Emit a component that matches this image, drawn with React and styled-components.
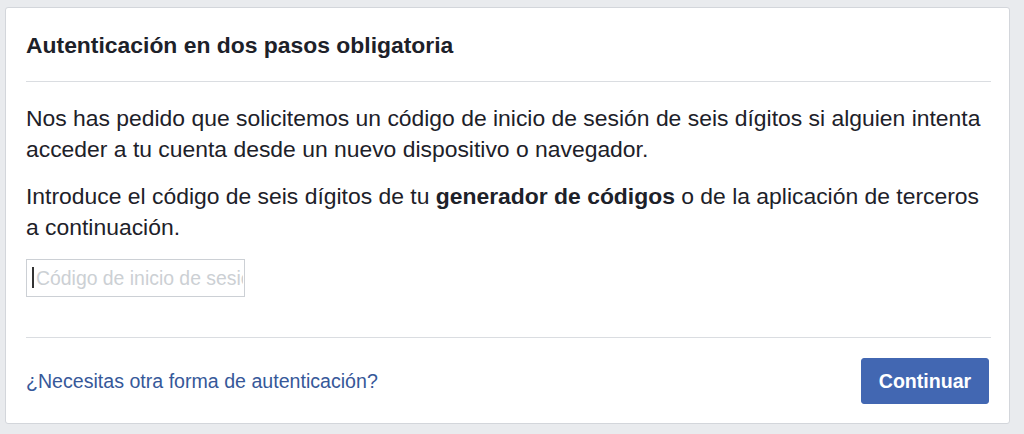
import * as React from "react";
import styled, { createGlobalStyle } from "styled-components";

const GlobalStyle = createGlobalStyle`
  html, body {
    margin: 0;
    padding: 0;
    background: #e9ebee;
    font-family: "Liberation Sans", Arial, Helvetica, sans-serif;
    color: #1d2129;
  }
  * {
    box-sizing: border-box;
  }
`;

const Page = styled.div`
  width: 1024px;
  height: 434px;
  padding: 7px 0 0 5px;
`;

const Card = styled.section`
  width: 1005px;
  height: 417px;
  background: #fff;
  border: 1px solid #d3d6db;
  border-radius: 3px;
  padding: 0 18px 0 20px;
  display: flex;
  flex-direction: column;
`;

const Header = styled.header`
  padding: 22px 0 21px;
  border-bottom: 1px solid #dadde1;
`;

const Title = styled.h2`
  margin: 0;
  font-size: 22.9px;
  line-height: 30px;
  font-weight: bold;
  color: #1d2129;
`;

const Body = styled.div`
  padding: 21px 0 40px;
  border-bottom: 1px solid #dadde1;
`;

const Text = styled.p`
  margin: 0 0 16px;
  font-size: 22.9px;
  line-height: 31px;
  color: #1d2129;
`;

const InputWrap = styled.div`
  position: relative;
  width: 219px;
  height: 38px;
`;

const CodeInput = styled.input`
  display: block;
  width: 100%;
  height: 100%;
  margin: 0;
  padding: 0 1px 0 9px;
  border: 1px solid #ccd0d5;
  border-radius: 0;
  font-family: inherit;
  font-size: 19.4px;
  color: #1d2129;
  outline: none;

  &::placeholder {
    color: #ccd0d4;
  }
`;

const Caret = styled.span`
  position: absolute;
  left: 6px;
  top: 8px;
  width: 2px;
  height: 21px;
  background: #333;
  pointer-events: none;
`;

const Footer = styled.footer`
  display: flex;
  align-items: center;
  justify-content: space-between;
  padding: 20px 2px 0 0;
`;

const HelpLink = styled.a`
  font-size: 19.6px;
  color: #365899;
  text-decoration: none;
  cursor: pointer;
`;

const PrimaryButton = styled.button`
  width: 128px;
  height: 46px;
  padding: 0;
  background: #4267b2;
  border: 1px solid #4267b2;
  border-radius: 3px;
  color: #fff;
  font-family: inherit;
  font-size: 19.6px;
  font-weight: bold;
  cursor: pointer;
`;

export default function App() {
  const [code, setCode] = React.useState("");

  return (
    <Page>
      <GlobalStyle />
      <Card>
        <Header>
          <Title>Autenticación en dos pasos obligatoria</Title>
        </Header>
        <Body>
          <Text>
            Nos has pedido que solicitemos un código de inicio de sesión de seis
            dígitos si alguien intenta acceder a tu cuenta desde un nuevo
            dispositivo o navegador.
          </Text>
          <Text>
            Introduce el código de seis dígitos de tu{" "}
            <strong>generador de códigos</strong> o de la aplicación de terceros
            a continuación.
          </Text>
          <InputWrap>
            <CodeInput
              type="text"
              value={code}
              onChange={(e) => setCode(e.target.value)}
              placeholder="Código de inicio de sesión"
            />
            {code === "" && <Caret />}
          </InputWrap>
        </Body>
        <Footer>
          <HelpLink>¿Necesitas otra forma de autenticación?</HelpLink>
          <PrimaryButton type="button">Continuar</PrimaryButton>
        </Footer>
      </Card>
    </Page>
  );
}
